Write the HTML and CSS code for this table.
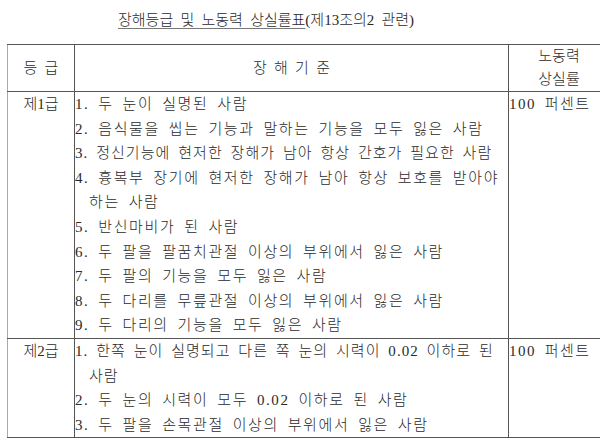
FILE: index.html
```html
<!DOCTYPE html>
<html lang="ko">
<head>
<meta charset="utf-8">
<title>장해등급 및 노동력 상실률표</title>
<link rel="stylesheet" href="styles.css">
</head>
<body>
<div class="page">
  <h1 class="title"><span class="u">장해등급 및 노동력 상실률표</span>(제13조의2 관련)</h1>
  <table class="grid">
    <colgroup><col class="c1"><col class="c2"><col class="c3"></colgroup>
    <thead>
      <tr><th class="h1">등 급</th><th class="h2">장 해 기 준</th><th class="h3">노동력<br>상실률</th></tr>
    </thead>
    <tbody>
      <tr>
        <td class="grade">제1급</td>
        <td class="crit">
          <p>1. 두 눈이 실명된 사람</p>
          <p>2. 음식물을 씹는 기능과 말하는 기능을 모두 잃은 사람</p>
          <p class="fit">3. 정신기능에 현저한 장해가 남아 항상 간호가 필요한 사람</p>
          <p>4. 흉복부 장기에 현저한 장해가 남아 항상 보호를 받아야 하는 사람</p>
          <p>5. 반신마비가 된 사람</p>
          <p>6. 두 팔을 팔꿈치관절 이상의 부위에서 잃은 사람</p>
          <p>7. 두 팔의 기능을 모두 잃은 사람</p>
          <p>8. 두 다리를 무릎관절 이상의 부위에서 잃은 사람</p>
          <p>9. 두 다리의 기능을 모두 잃은 사람</p>
        </td>
        <td class="rate">100 퍼센트</td>
      </tr>
      <tr>
        <td class="grade">제2급</td>
        <td class="crit">
          <p class="fit">1. 한쪽 눈이 실명되고 다른 쪽 눈의 시력이 0.02 이하로 된 사람</p>
          <p>2. 두 눈의 시력이 모두 0.02 이하로 된 사람</p>
          <p>3. 두 팔을 손목관절 이상의 부위에서 잃은 사람</p>
        </td>
        <td class="rate">100 퍼센트</td>
      </tr>
    </tbody>
  </table>
</div>
</body>
</html>
```

FILE: styles.css
```css
html, body {
  margin: 0;
  padding: 0;
  background: #fff;
}
body {
  width: 600px;
  height: 438px;
  overflow: hidden;
  font-family: "Liberation Serif", "Noto Sans CJK KR", serif;
  font-size: 15px;
  color: #2a2a2a;
  font-weight: 300;
  word-spacing: 3.5px;
}
.page {
  padding: 10px 0 0 7px;
}
.title {
  margin: 0 0 0 111px;
  font-size: 15px;
  font-weight: 300;
  line-height: 20px;
  height: 34px;
  color: #2a2a2a;
}
.u {
  text-decoration: underline;
  text-decoration-color: #777;
  text-underline-offset: 3px;
}
.grid {
  border-collapse: collapse;
  table-layout: fixed;
  width: 602px;
}
.c1 { width: 67px; }
.c2 { width: 434px; }
.c3 { width: 101px; }
.grid th, .grid td {
  border: 1px solid #555;
  padding: 0;
  font-weight: 300;
}
.grid tr > :first-child {
  border-left-color: #aaa;
}
.grid th {
  height: 45px;
  line-height: 23px;
  vertical-align: middle;
  text-align: center;
}
.grid td {
  vertical-align: top;
  line-height: 24.6px;
}
.grade {
  text-align: center;
}
.crit {
  padding: 0 1px 0 3px;
  letter-spacing: 1.6px;
}
.crit p {
  margin: 0;
  padding-left: 14px;
  text-indent: -14px;
}
.crit p.fit {
  letter-spacing: 1.05px;
  word-spacing: 3px;
}
.rate {
  padding-left: 4px;
  white-space: nowrap;
  letter-spacing: 1.5px;
}
```
